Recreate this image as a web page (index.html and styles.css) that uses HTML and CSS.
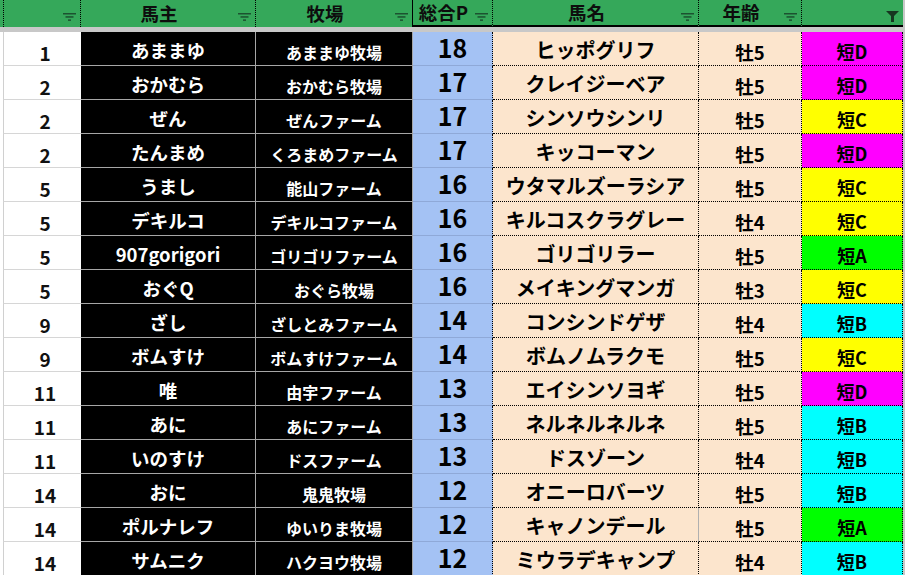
FILE: index.html
```html
<!DOCTYPE html>
<html lang="ja">
<head>
<meta charset="utf-8">
<title>ランキング</title>
<link rel="stylesheet" href="styles.css">
</head>
<body>
<div class="sheet">
  <div class="hdr">
    <div class="h h-a"><svg class="flt" viewBox="0 0 13 8"><rect x="0" y="0" width="13" height="1.5"/><rect x="2.5" y="3.2" width="8" height="1.5"/><rect x="5" y="6.4" width="3" height="1.5"/></svg></div>
    <div class="h">馬主<svg class="flt" viewBox="0 0 13 8"><rect x="0" y="0" width="13" height="1.5"/><rect x="2.5" y="3.2" width="8" height="1.5"/><rect x="5" y="6.4" width="3" height="1.5"/></svg></div>
    <div class="h h-c">牧場<svg class="flt" viewBox="0 0 13 8"><rect x="0" y="0" width="13" height="1.5"/><rect x="2.5" y="3.2" width="8" height="1.5"/><rect x="5" y="6.4" width="3" height="1.5"/></svg></div>
    <div class="h h-t">総合P<svg class="flt" viewBox="0 0 13 8"><rect x="0" y="0" width="13" height="1.5"/><rect x="2.5" y="3.2" width="8" height="1.5"/><rect x="5" y="6.4" width="3" height="1.5"/></svg></div>
    <div class="h h-t">馬名<svg class="flt" viewBox="0 0 13 8"><rect x="0" y="0" width="13" height="1.5"/><rect x="2.5" y="3.2" width="8" height="1.5"/><rect x="5" y="6.4" width="3" height="1.5"/></svg></div>
    <div class="h h-t">年齢<svg class="flt" viewBox="0 0 13 8"><rect x="0" y="0" width="13" height="1.5"/><rect x="2.5" y="3.2" width="8" height="1.5"/><rect x="5" y="6.4" width="3" height="1.5"/></svg></div>
    <div class="h h-t h-g"><svg class="flt on" viewBox="0 0 13 11"><path d="M0 0H13L8 5V11H5V5Z"/></svg></div>
  </div>
  <div class="freeze"></div>
  <div class="body">
    <div class="row"><div class="c rank">1</div><div class="c owner">あままゆ</div><div class="c farm">あままゆ牧場</div><div class="c pts">18</div><div class="c horse">ヒッポグリフ</div><div class="c age">牡5</div><div class="c grade gd">短D</div></div>
    <div class="row"><div class="c rank">2</div><div class="c owner">おかむら</div><div class="c farm">おかむら牧場</div><div class="c pts">17</div><div class="c horse">クレイジーベア</div><div class="c age">牡5</div><div class="c grade gd">短D</div></div>
    <div class="row"><div class="c rank">2</div><div class="c owner">ぜん</div><div class="c farm">ぜんファーム</div><div class="c pts">17</div><div class="c horse">シンソウシンリ</div><div class="c age">牡5</div><div class="c grade gc">短C</div></div>
    <div class="row"><div class="c rank">2</div><div class="c owner">たんまめ</div><div class="c farm">くろまめファーム</div><div class="c pts">17</div><div class="c horse">キッコーマン</div><div class="c age">牡5</div><div class="c grade gd">短D</div></div>
    <div class="row"><div class="c rank">5</div><div class="c owner">うまし</div><div class="c farm">能山ファーム</div><div class="c pts">16</div><div class="c horse">ウタマルズーラシア</div><div class="c age">牡5</div><div class="c grade gc">短C</div></div>
    <div class="row"><div class="c rank">5</div><div class="c owner">デキルコ</div><div class="c farm">デキルコファーム</div><div class="c pts">16</div><div class="c horse">キルコスクラグレー</div><div class="c age">牡4</div><div class="c grade gc">短C</div></div>
    <div class="row"><div class="c rank">5</div><div class="c owner">907gorigori</div><div class="c farm">ゴリゴリファーム</div><div class="c pts">16</div><div class="c horse">ゴリゴリラー</div><div class="c age">牡5</div><div class="c grade ga">短A</div></div>
    <div class="row"><div class="c rank">5</div><div class="c owner">おぐQ</div><div class="c farm">おぐら牧場</div><div class="c pts">16</div><div class="c horse">メイキングマンガ</div><div class="c age">牡3</div><div class="c grade gc">短C</div></div>
    <div class="row"><div class="c rank">9</div><div class="c owner">ざし</div><div class="c farm">ざしとみファーム</div><div class="c pts">14</div><div class="c horse">コンシンドゲザ</div><div class="c age">牡4</div><div class="c grade gb">短B</div></div>
    <div class="row"><div class="c rank">9</div><div class="c owner">ボムすけ</div><div class="c farm">ボムすけファーム</div><div class="c pts">14</div><div class="c horse">ボムノムラクモ</div><div class="c age">牡5</div><div class="c grade gc">短C</div></div>
    <div class="row"><div class="c rank">11</div><div class="c owner">唯</div><div class="c farm">由宇ファーム</div><div class="c pts">13</div><div class="c horse">エイシンソヨギ</div><div class="c age">牡5</div><div class="c grade gd">短D</div></div>
    <div class="row"><div class="c rank">11</div><div class="c owner">あに</div><div class="c farm">あにファーム</div><div class="c pts">13</div><div class="c horse">ネルネルネルネ</div><div class="c age">牡5</div><div class="c grade gb">短B</div></div>
    <div class="row"><div class="c rank">11</div><div class="c owner">いのすけ</div><div class="c farm">ドスファーム</div><div class="c pts">13</div><div class="c horse">ドスゾーン</div><div class="c age">牡4</div><div class="c grade gb">短B</div></div>
    <div class="row"><div class="c rank">14</div><div class="c owner">おに</div><div class="c farm">鬼鬼牧場</div><div class="c pts">12</div><div class="c horse">オニーロバーツ</div><div class="c age">牡5</div><div class="c grade gb">短B</div></div>
    <div class="row"><div class="c rank">14</div><div class="c owner">ポルナレフ</div><div class="c farm">ゆいりま牧場</div><div class="c pts">12</div><div class="c horse solid-r">キャノンデール</div><div class="c age">牡5</div><div class="c grade ga">短A</div></div>
    <div class="row"><div class="c rank">14</div><div class="c owner">サムニク</div><div class="c farm">ハクヨウ牧場</div><div class="c pts">12</div><div class="c horse">ミウラデキャンプ</div><div class="c age">牡4</div><div class="c grade gb">短B</div></div>
  </div>
</div>
</body>
</html>
```

FILE: styles.css
```css
html, body {
  margin: 0;
  padding: 0;
}
body {
  background: #c8c8c8;
  font-family: "Noto Sans CJK JP", "Noto Sans", sans-serif;
  font-weight: 700;
  color: #000;
  overflow: hidden;
}
.sheet {
  width: 903px;
}
.hdr,
.row {
  display: grid;
  grid-template-columns: 81px 175px 157px 80px 206px 103px 101px;
}
.hdr {
  height: 27px;
  background: #35a85a;
}
.h {
  position: relative;
  box-sizing: border-box;
  display: flex;
  align-items: center;
  justify-content: center;
  padding-right: 18px;
  font-size: 18.5px;
  line-height: 1;
  color: #0d0d0d;
  border-right: 1px dotted #000;
}
.h-a {
  margin-left: 3px;
  border-left: 1px dotted #000;
}
.h-c {
  border-right: 1px solid #000;
}
.h-t {
  border-bottom: 2px solid #000;
}
.h-g {
  border-right: none;
}
.flt {
  position: absolute;
  right: 4px;
  top: 13px;
  width: 13px;
  height: 8px;
  fill: #1c5230;
}
.h-t .flt {
  top: 13px;
}
.flt.on {
  top: 11px;
  right: 4px;
  height: 11px;
  fill: #163620;
}
.freeze {
  height: 5px;
  background: #c8c8c8;
}
.body {
  background: #fff;
}
.row {
  height: 34px;
}
.c {
  box-sizing: border-box;
  display: flex;
  align-items: center;
  justify-content: center;
  line-height: 1;
  padding-top: 4px;
  white-space: nowrap;
}
.rank {
  margin-left: 3px;
  border-left: 1px solid #d0d0d0;
  border-bottom: 1px solid #d6d6d6;
  background: #fff;
  font-size: 19px;
  color: #111;
  padding-top: 7px;
  padding-left: 5px;
}
.owner,
.farm {
  background: #000;
  color: #fff;
  border-bottom: 1px solid #a6a6a6;
  border-right: 1px solid #a6a6a6;
}
.owner {
  font-size: 18.5px;
}
.farm {
  font-size: 16px;
  padding-top: 6px;
}
.pts {
  background: #a4c2f4;
  border-bottom: 1px solid #8fa9d8;
  border-right: 1px dotted #000;
  font-size: 25px;
  padding-top: 0;
  padding-bottom: 2px;
}
.horse,
.age {
  background: #fce5cd;
  border-bottom: 1px dotted #000;
  border-right: 1px dotted #000;
}
.horse {
  font-size: 20px;
  padding-top: 3px;
}
.horse.solid-r {
  border-right: 1px solid #b0b0b0;
}
.age {
  font-size: 18.5px;
  padding-top: 7px;
}
.grade {
  border-bottom: 1px dotted #000;
  border-right: 1px dotted #000;
  font-size: 18px;
  padding-top: 5px;
}
.gd { background: #ff00ff; }
.gc { background: #ffff00; }
.gb { background: #00ffff; }
.ga { background: #00ff00; }
```
